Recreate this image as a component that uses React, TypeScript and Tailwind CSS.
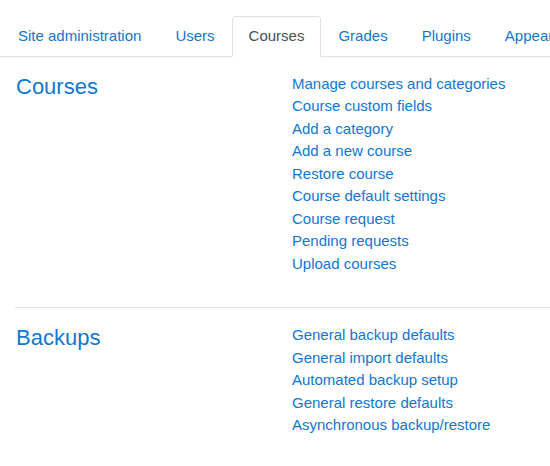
const tabs = ["Site administration", "Users", "Courses", "Grades", "Plugins", "Appearance", "Server"];

const sections = [
  {
    title: "Courses",
    links: [
      "Manage courses and categories",
      "Course custom fields",
      "Add a category",
      "Add a new course",
      "Restore course",
      "Course default settings",
      "Course request",
      "Pending requests",
      "Upload courses",
    ],
  },
  {
    title: "Backups",
    links: [
      "General backup defaults",
      "General import defaults",
      "Automated backup setup",
      "General restore defaults",
      "Asynchronous backup/restore",
    ],
  },
];

export default function App() {
  return (
    <div
      className="h-[466px] w-[550px] overflow-hidden bg-white text-[15px] leading-[22.5px]"
      style={{ fontFamily: '"Liberation Sans", Arial, sans-serif' }}
    >
      <div className="pt-4">
        <ul className="flex whitespace-nowrap border-b border-[#dee2e6] pl-px">
          {tabs.map((t) => (
            <li key={t} className="-mb-px">
              <a
                href="#"
                className={
                  t === "Courses"
                    ? "block rounded-t border border-[#dee2e6] border-b-white bg-white px-4 py-[8px] text-[#495057]"
                    : "block border border-transparent px-4 py-[8px] text-[#1177d1]"
                }
              >
                {t}
              </a>
            </li>
          ))}
        </ul>
      </div>

      <div className="pl-[15px]">
        {sections.map((s, i) => (
          <div
            key={s.title}
            className={i > 0 ? "border-t border-[#e5e5e5] pt-4" : "pt-4"}
          >
            <div className="flex pb-8">
              <h3 className="w-[277px] shrink-0 pl-px pt-[1px] text-[22px] leading-[26.4px] text-[#1177d1]">
                {s.title}
              </h3>
              <ul>
                {s.links.map((l) => (
                  <li key={l}>
                    <a href="#" className="text-[#1177d1]">
                      {l}
                    </a>
                  </li>
                ))}
              </ul>
            </div>
          </div>
        ))}
      </div>
    </div>
  );
}
